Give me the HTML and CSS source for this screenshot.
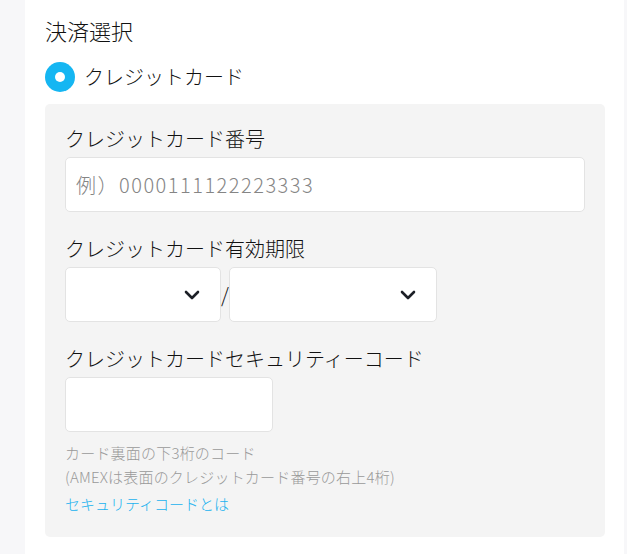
FILE: index.html
```html
<!DOCTYPE html>
<html lang="ja">
<head>
<meta charset="utf-8">
<link rel="stylesheet" href="styles.css">
</head>
<body>
<div class="page">
  <div class="side-left"></div>
  <main class="main">
    <h2 class="heading">決済選択</h2>
    <label class="radio-row">
      <span class="radio"><span class="radio-dot"></span></span>
      <span class="radio-label">クレジットカード</span>
    </label>
    <div class="card-box">
      <div class="field">
        <div class="label">クレジットカード番号</div>
        <input class="input input-full" type="text" placeholder="例）0000111122223333">
      </div>
      <div class="field">
        <div class="label">クレジットカード有効期限</div>
        <div class="expiry">
          <div class="select select-month">
            <svg class="chev" viewBox="0 0 16 10" width="16" height="10"><path d="M2 2l6 6 6-6" fill="none" stroke="#1c1f26" stroke-width="2.6" stroke-linecap="round" stroke-linejoin="round"/></svg>
          </div>
          <span class="slash">/</span>
          <div class="select select-year">
            <svg class="chev" viewBox="0 0 16 10" width="16" height="10"><path d="M2 2l6 6 6-6" fill="none" stroke="#1c1f26" stroke-width="2.6" stroke-linecap="round" stroke-linejoin="round"/></svg>
          </div>
        </div>
      </div>
      <div class="field field-last">
        <div class="label">クレジットカードセキュリティーコード</div>
        <input class="input input-cvc" type="text">
      </div>
      <p class="help">カード裏面の下3桁のコード<br>(AMEXは表面のクレジットカード番号の右上4桁)</p>
      <a class="link" href="#">セキュリティコードとは</a>
    </div>
  </main>
  <div class="side-right"></div>
</div>
</body>
</html>
```
FILE: styles.css
```css
* { box-sizing: border-box; }
html, body { margin: 0; padding: 0; }
body {
  font-family: "Noto Sans CJK JP", "Noto Sans", sans-serif;
  font-weight: 300;
  color: #111;
  background: #fff;
}
.page {
  display: flex;
  min-height: 554px;
}
.side-left {
  width: 25px;
  background: #f7f7f9;
  flex: none;
}
.side-right {
  width: 3px;
  background: #f7f7f9;
  flex: none;
}
.main {
  flex: 1;
  padding: 15px 19px 0 20px;
}
.heading {
  margin: 0;
  font-size: 22px;
  font-weight: 300;
  line-height: 30px;
}
.radio-row {
  display: flex;
  align-items: center;
  gap: 9px;
  margin-top: 17px;
  height: 30px;
}
.radio {
  width: 30px;
  height: 30px;
  border-radius: 50%;
  background: #15b6f2;
  display: flex;
  align-items: center;
  justify-content: center;
}
.radio-dot {
  width: 10px;
  height: 10px;
  border-radius: 50%;
  background: #fff;
}
.radio-label {
  font-size: 20px;
  line-height: 30px;
}
.card-box {
  margin-top: 12px;
  background: #f4f4f4;
  border-radius: 5px;
  padding: 21px 20px 21px 20px;
}
.field {
  margin-bottom: 23px;
}
.field-last {
  margin-bottom: 9px;
}
.label {
  font-size: 20px;
  line-height: 27px;
  margin-bottom: 5px;
}
.input {
  display: block;
  height: 55px;
  background: #fff;
  border: 1px solid #e3e3e3;
  border-radius: 5px;
  padding: 0 10px;
  font-family: inherit;
  font-weight: 300;
  font-size: 20px;
  letter-spacing: 1.5px;
  color: #111;
  outline: none;
}
.input::placeholder { color: #858585; }
.input-full { width: 100%; }
.input-cvc { width: 208px; }
.expiry {
  display: flex;
  align-items: center;
}
.select {
  height: 55px;
  background: #fff;
  border: 1px solid #e3e3e3;
  border-radius: 5px;
  display: flex;
  align-items: center;
  justify-content: flex-end;
  padding-right: 20px;
}
.select-month { width: 156px; }
.select-year { width: 208px; }
.slash {
  width: 8px;
  font-size: 20px;
  text-align: center;
}
.help {
  margin: 0;
  font-size: 15px;
  line-height: 24px;
  color: #999;
  letter-spacing: 0.2px;
}
.link {
  display: block;
  margin-top: 3px;
  font-size: 15px;
  line-height: 24px;
  color: #1ab2ef;
  text-decoration: none;
}
```
